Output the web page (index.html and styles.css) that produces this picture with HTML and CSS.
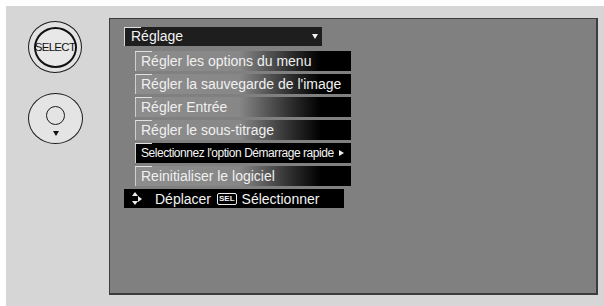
FILE: index.html
```html
<!DOCTYPE html>
<html lang="fr">
<head>
<meta charset="utf-8">
<link rel="stylesheet" href="styles.css">
</head>
<body>
<div class="screen">
  <div class="remote">
    <div class="btn-select"><div class="btn-select-inner">SELECT</div></div>
    <div class="btn-nav"><div class="nav-inner"></div><div class="nav-tri"></div></div>
  </div>
  <div class="panel">
    <div class="menu">
      <div class="header"><span>Réglage</span><span class="caret"></span></div>
      <ul class="items">
        <li class="item">Régler les options du menu</li>
        <li class="item">Régler la sauvegarde de l'image</li>
        <li class="item">Régler Entrée</li>
        <li class="item">Régler le sous-titrage</li>
        <li class="item item-active"><span>Selectionnez l'option Démarrage rapide</span><span class="arrow"></span></li>
        <li class="item">Reinitialiser le logiciel</li>
      </ul>
      <div class="footer">
        <span class="move-icon"><span class="t-up"></span><span class="t-right"></span><span class="t-down"></span></span>
        <span class="f-text">Déplacer</span>
        <span class="sel-key">SEL</span>
        <span class="f-text">Sélectionner</span>
      </div>
    </div>
  </div>
</div>
</body>
</html>
```

FILE: styles.css
```css
html, body {
  margin: 0;
  padding: 0;
  background: #ffffff;
}
body {
  padding: 6px 0 0 6px;
  width: 598px;
  height: 300px;
  overflow: hidden;
  font-family: "Liberation Sans", Arial, sans-serif;
}
.screen {
  display: flex;
  width: 598px;
  height: 300px;
  background: #d6d6d6;
  box-sizing: border-box;
  padding-top: 12px;
}
.remote {
  width: 103px;
  flex: none;
  display: flex;
  flex-direction: column;
  padding: 3px 0 0 22px;
  box-sizing: border-box;
}
.btn-select {
  width: 54px;
  height: 52px;
  border: 1.5px solid #1a1a1a;
  border-radius: 50%;
  box-sizing: border-box;
  background: #e2e2e2;
  display: flex;
  align-items: center;
  justify-content: center;
}
.btn-select-inner {
  width: 43px;
  height: 41px;
  border: 2px solid #111;
  border-radius: 50%;
  box-sizing: border-box;
  background: #e8e8e8;
  display: flex;
  align-items: center;
  justify-content: center;
  font-size: 11.5px;
  letter-spacing: -0.7px;
  color: #111;
}
.btn-nav {
  margin-top: 20px;
  width: 55px;
  height: 51px;
  border: 1.5px solid #1a1a1a;
  border-radius: 50%;
  box-sizing: border-box;
  background: #e4e4e4;
  display: flex;
  flex-direction: column;
  align-items: center;
  padding-top: 12px;
}
.nav-inner {
  width: 19px;
  height: 19px;
  border: 1.5px solid #1a1a1a;
  border-radius: 50%;
  box-sizing: border-box;
}
.nav-tri {
  margin-top: 6px;
  width: 0;
  height: 0;
  border-left: 3px solid transparent;
  border-right: 3px solid transparent;
  border-top: 5px solid #111;
}
.panel {
  width: 489px;
  height: 277px;
  flex: none;
  box-sizing: border-box;
  background: #808080;
  border: 1px solid #3c3c3c;
  border-right-width: 2px;
  border-bottom-width: 2px;
  padding: 8px 0 0 14px;
}
.menu {
  display: flex;
  flex-direction: column;
}
.header {
  position: relative;
  width: 198px;
  height: 19px;
  background: #1e1e1e;
  color: #f2f2f2;
  font-size: 14px;
  line-height: 19px;
  padding-left: 6px;
  box-sizing: border-box;
  border-left: 1px solid #d8d8d8;
  display: flex;
  align-items: center;
  justify-content: space-between;
  padding-right: 4px;
}
.header::before,
.item::before {
  content: "";
  position: absolute;
  left: -1px;
  top: 0;
  width: 17px;
  height: 1px;
  background: #e0e0e0;
}
.caret {
  width: 0;
  height: 0;
  border-left: 3.5px solid transparent;
  border-right: 3.5px solid transparent;
  border-top: 5px solid #f0f0f0;
}
.items {
  list-style: none;
  margin: 2px 0 0 11px;
  padding: 0;
}
.item {
  position: relative;
  width: 216px;
  height: 20px;
  margin-top: 3px;
  box-sizing: border-box;
  border-left: 1px solid #d0d0d0;
  padding-left: 5px;
  font-size: 14px;
  line-height: 20px;
  color: #f0f0f0;
  background: linear-gradient(90deg, #8d8d8d 0%, #878787 48%, #2a2a2a 73%, #000 86%, #000 100%);
  white-space: nowrap;
}
.item-active {
  background: #000;
  font-size: 12px;
  letter-spacing: -0.45px;
  color: #f4f4f4;
  display: flex;
  align-items: center;
}
.arrow {
  margin-left: 5px;
  width: 0;
  height: 0;
  border-top: 3.5px solid transparent;
  border-bottom: 3.5px solid transparent;
  border-left: 5px solid #eee;
}
.footer {
  margin-top: 3px;
  width: 220px;
  height: 19px;
  background: #000;
  color: #f2f2f2;
  font-size: 14px;
  display: flex;
  align-items: center;
  padding-left: 8px;
  box-sizing: border-box;
}
.move-icon {
  position: relative;
  width: 10px;
  height: 13px;
  margin-right: 13px;
}
.t-up, .t-down, .t-right {
  position: absolute;
  width: 0;
  height: 0;
}
.t-up {
  left: 0;
  top: 0;
  border-left: 3px solid transparent;
  border-right: 3px solid transparent;
  border-bottom: 4px solid #eee;
}
.t-down {
  left: 0;
  bottom: 0;
  border-left: 3px solid transparent;
  border-right: 3px solid transparent;
  border-top: 4px solid #eee;
}
.t-right {
  left: 6px;
  top: 3.5px;
  border-top: 3px solid transparent;
  border-bottom: 3px solid transparent;
  border-left: 4px solid #eee;
}
.sel-key {
  margin: 0 5px 0 6px;
  font-size: 8px;
  font-weight: bold;
  line-height: 10px;
  padding: 0 1px;
  border: 1px solid #eee;
  border-radius: 2px;
}
```
